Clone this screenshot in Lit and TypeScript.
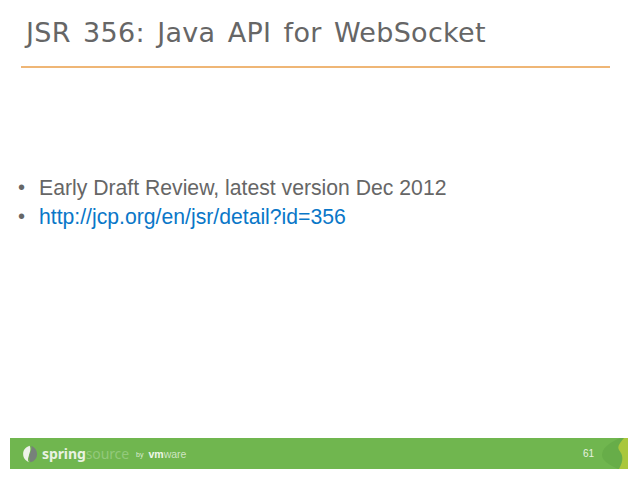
import { LitElement, html, css, svg } from "lit";
import { customElement } from "lit/decorators.js";

@customElement("app-root")
export class AppRoot extends LitElement {
  static styles = css`
    :host { display: block; width: 638px; height: 479px; background: #fff; overflow: hidden; }
    .slide { width: 638px; height: 479px; display: flex; flex-direction: column; }
    h1 {
      margin: 0; padding: 16px 0 0 26px; height: 34px;
      font: 400 27px/34px "DejaVu Sans", sans-serif; color: #666; letter-spacing: 0.3px; word-spacing: 3.4px; white-space: nowrap;
    }
    .rule { margin: 16px 0 0 21px; width: 589px; height: 2px; background: #efb676; flex: none; }
    ul { list-style: none; margin: 105px 0 0 0; padding: 0 0 0 18px; font: 400 21.2px/29px "Liberation Sans", sans-serif; color: #666; flex: 1; }
    li { display: flex; white-space: nowrap; }
    .b { width: 21px; font-size: 20px; flex: none; }
    a { color: #0a77c8; text-decoration: none; }
    footer {
      margin: 0 10px 10px; height: 31px; background: #70b64f; display: flex; align-items: center;
      padding-left: 12px; position: relative; overflow: hidden; color: #e8f3e0; flex: none;
    }
    .logo { width: 17px; height: 18px; margin-right: 3px; flex: none; }
    .spring { font: 700 14px/22px "Noto Sans", sans-serif; color: #e9f2e2; letter-spacing: -0.1px; }
    .source { font: 400 14px/22px "Noto Sans", sans-serif; color: #93c97b; letter-spacing: -0.1px; }
    .by { font: 400 7px/22px "Liberation Sans", sans-serif; margin: 2px 5px 0 7px; color: #dcebd2; }
    .vm { font: 700 10.5px/22px "Liberation Sans", sans-serif; color: #eef6e8; }
    .ware { font: 400 10.5px/22px "Liberation Sans", sans-serif; color: #cfe5c2; }
    .num { position: absolute; left: 573px; top: 9px; font: 400 10px/14px "Liberation Sans", sans-serif; color: #e8f3e0; }
    .leaf { position: absolute; right: 0; top: 0; width: 28px; height: 31px; }
  `;

  render() {
    return html`<div class="slide">
      <h1>JSR 356: Java API for WebSocket</h1>
      <div class="rule"></div>
      <ul>
        <li><span class="b">•</span><span>Early Draft Review, latest version Dec 2012</span></li>
        <li><span class="b">•</span><a href="#">http://jcp.org/en/jsr/detail?id=356</a></li>
      </ul>
      <footer>
        <svg class="logo" viewBox="0 0 20 22">
          ${svg`<path d="M9 1C3 3 1 7 1 11c0 5 3 8 7 10-2-3-1-5 0-8 1-4 3-7 1-12Z" fill="#eef2ea"/>
          <path d="M11 1c1 4-1 7-2 11-1 3-1 6 1 9 5-1 8-5 8-10 0-5-3-8-7-10Z" fill="#77807a"/>`}
        </svg>
        <span class="spring">spring</span><span class="source">source</span><span class="by">by</span><span class="vm">vm</span><span class="ware">ware</span>
        <span class="num">61</span>
        <svg class="leaf" viewBox="0 0 28 31">
          ${svg`<path d="M20 0C8 5 2 11 2 17c0 6 8 10 16 14h10V0Z" fill="#67ad49"/>
          <path d="M24 0c-4 5-7 8-5 12 4 5 5 10 0 19h9V0Z" fill="#a9c73c"/>`}
        </svg>
      </footer>
    </div>`;
  }
}
